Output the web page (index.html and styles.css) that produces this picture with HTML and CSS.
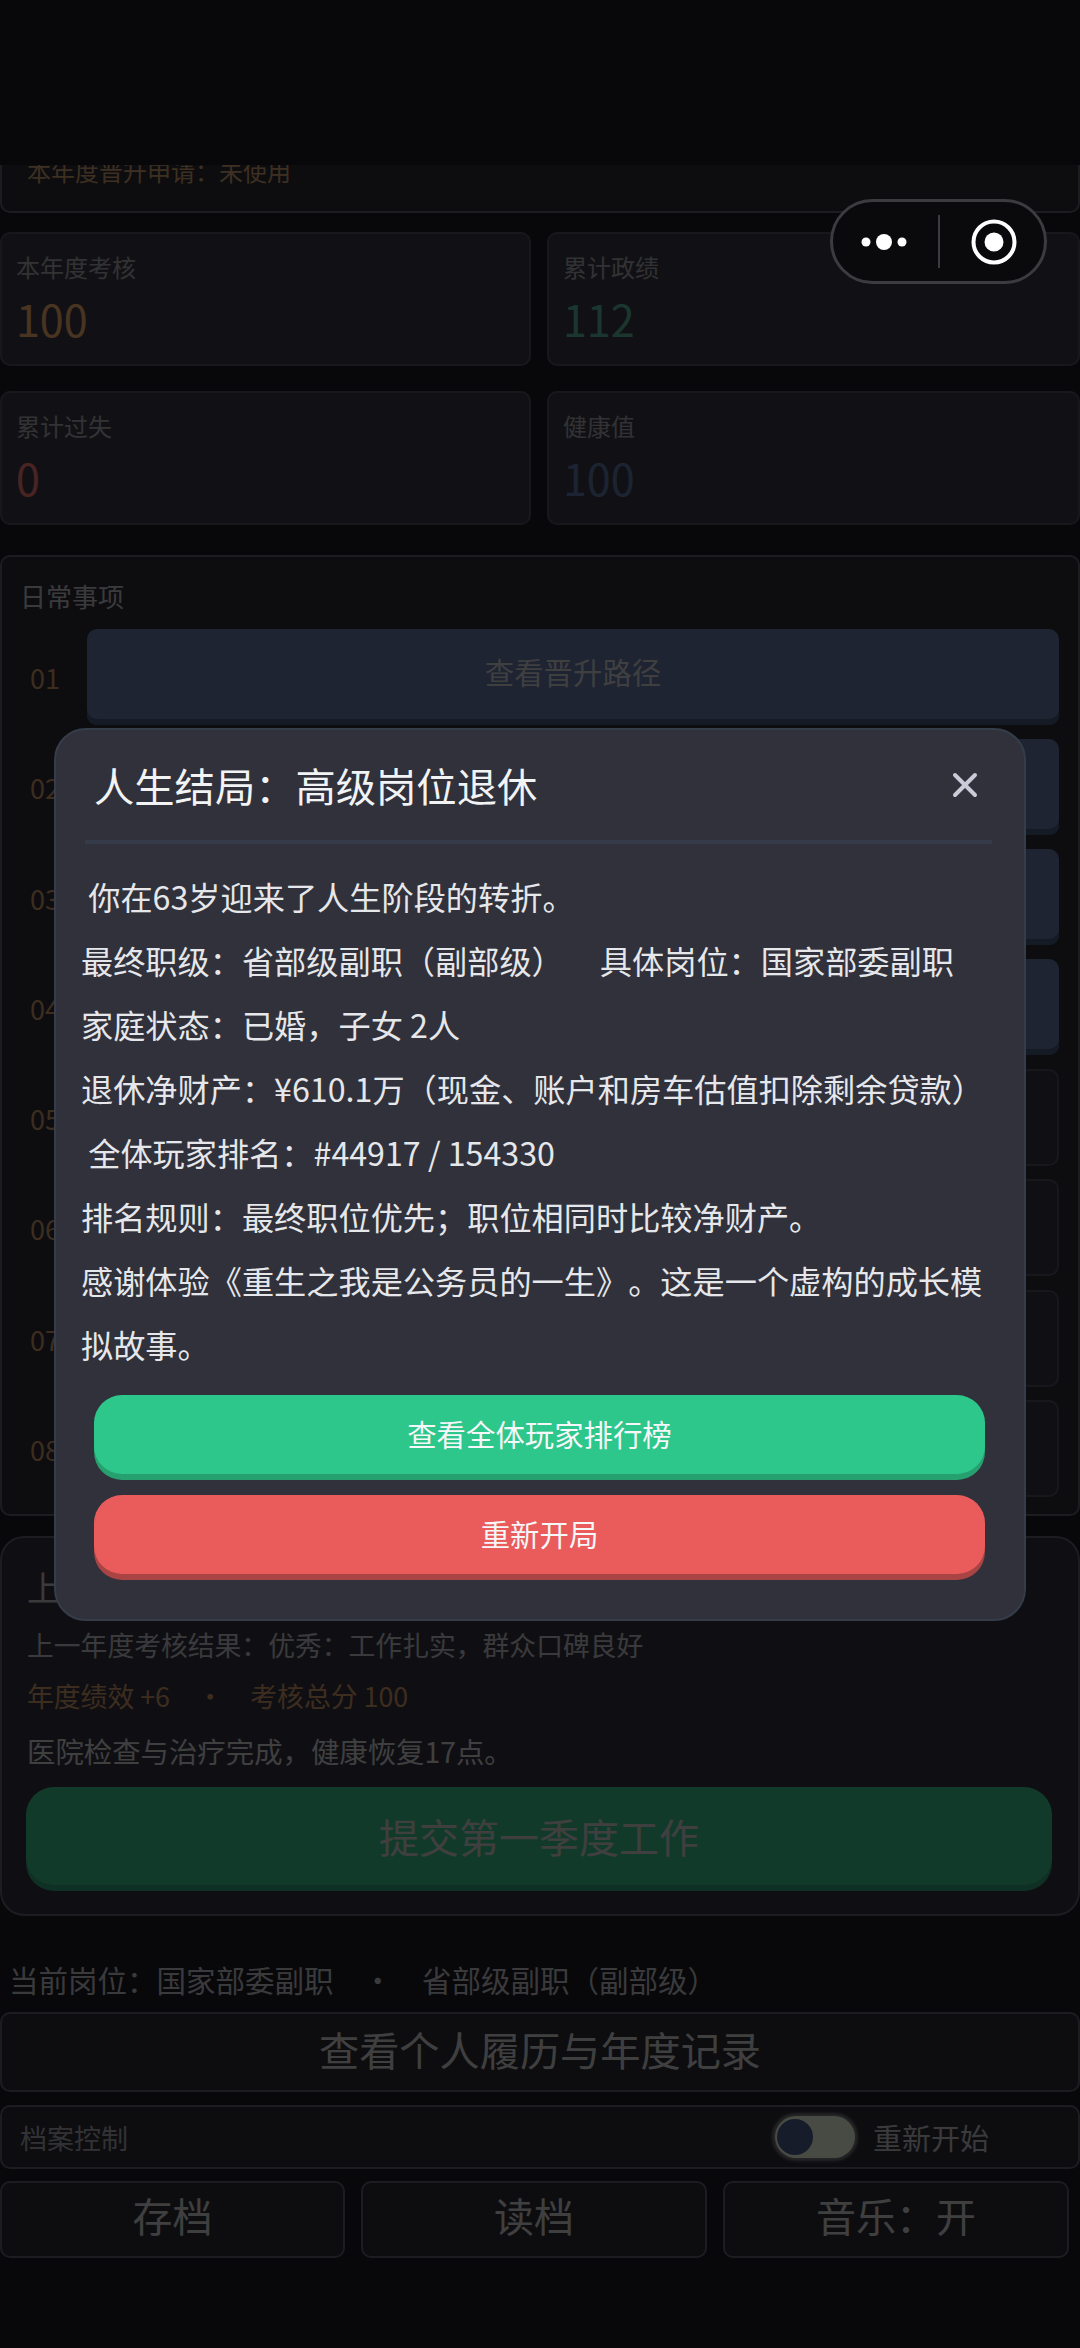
FILE: index.html
```html
<!DOCTYPE html>
<html lang="zh-CN">
<head>
  <meta charset="UTF-8" />
  <meta name="viewport" content="width=device-width, initial-scale=1.0"/>
  <title>人生结局</title>
  <link rel="stylesheet" href="styles.css">
</head>
<body>
  <div class="topbar"></div>

  <div class="page">
    <section class="panel promo">
      <p class="promo-text">本年度晋升申请：未使用</p>
    </section>

    <section class="stats">
      <div class="stat">
        <p class="stat-label">本年度考核</p>
        <p class="stat-value orange">100</p>
      </div>
      <div class="stat">
        <p class="stat-label">累计政绩</p>
        <p class="stat-value green">112</p>
      </div>
      <div class="stat">
        <p class="stat-label">累计过失</p>
        <p class="stat-value red">0</p>
      </div>
      <div class="stat">
        <p class="stat-label">健康值</p>
        <p class="stat-value blue">100</p>
      </div>
    </section>

    <section class="panel daily">
      <h3 class="daily-title">日常事项</h3>
      <div class="daily-row"><span class="row-no">01</span><button class="row-btn primary">查看晋升路径</button></div>
      <div class="daily-row"><span class="row-no">02</span><button class="row-btn primary"></button></div>
      <div class="daily-row"><span class="row-no">03</span><button class="row-btn primary"></button></div>
      <div class="daily-row"><span class="row-no">04</span><button class="row-btn primary"></button></div>
      <div class="daily-row"><span class="row-no">05</span><button class="row-btn"></button></div>
      <div class="daily-row"><span class="row-no">06</span><button class="row-btn"></button></div>
      <div class="daily-row"><span class="row-no">07</span><button class="row-btn"></button></div>
      <div class="daily-row"><span class="row-no">08</span><button class="row-btn"></button></div>
    </section>

    <section class="panel review">
      <h3 class="review-title">上</h3>
      <p class="review-line first">上一年度考核结果：优秀：工作扎实，群众口碑良好</p>
      <p class="review-line score">年度绩效 +6　·　考核总分 100</p>
      <p class="review-line health">医院检查与治疗完成，健康恢复17点。</p>
      <button class="submit-btn">提交第一季度工作</button>
    </section>

    <p class="position">当前岗位：国家部委副职　·　省部级副职（副部级）</p>
    <button class="record-btn">查看个人履历与年度记录</button>

    <div class="archive">
      <span class="archive-label">档案控制</span>
      <span class="toggle"><span class="knob"></span></span>
      <span class="archive-action">重新开始</span>
    </div>

    <div class="actions">
      <button class="action-btn">存档</button>
      <button class="action-btn">读档</button>
      <button class="action-btn">音乐：开</button>
    </div>
  </div>

  <div class="overlay">
    <div class="modal">
      <div class="modal-head">
        <h2 class="modal-title">人生结局：高级岗位退休</h2>
        <svg class="modal-close" width="26" height="26" viewBox="0 0 26 26">
          <path d="M3 3 L23 23 M23 3 L3 23" stroke="#c9ccd8" stroke-width="4" stroke-linecap="round" fill="none"/>
        </svg>
      </div>
      <p class="modal-text"> 你在63岁迎来了人生阶段的转折。
最终职级：省部级副职（副部级）     具体岗位：国家部委副职
家庭状态：已婚，子女 2人
退休净财产：¥610.1万（现金、账户和房车估值扣除剩余贷款）
 全体玩家排名：#44917 / 154330
排名规则：最终职位优先；职位相同时比较净财产。
感谢体验《重生之我是公务员的一生》。这是一个虚构的成长模拟故事。</p>
      <button class="modal-btn rank">查看全体玩家排行榜</button>
      <button class="modal-btn restart">重新开局</button>
    </div>
  </div>

  <div class="capsule">
    <svg width="54" height="18" viewBox="0 0 54 18">
      <circle cx="5" cy="9" r="4.5" fill="#fff"/>
      <circle cx="23" cy="9" r="8" fill="#fff"/>
      <circle cx="41" cy="9" r="4.5" fill="#fff"/>
    </svg>
    <span class="capsule-line"></span>
    <svg width="48" height="48" viewBox="0 0 48 48">
      <circle cx="24" cy="24" r="20.5" stroke="#fff" stroke-width="4" fill="none"/>
      <circle cx="24" cy="24" r="9.5" fill="#fff"/>
    </svg>
  </div>
</body>
</html>
```

FILE: styles.css
```css
* {
  box-sizing: border-box;
}

html, body {
  margin: 0;
  height: 2348px;
  overflow: hidden;
}

body {
  font-family: "Noto Sans CJK SC", "Noto Sans", sans-serif;
  text-spacing-trim: space-all;
  background: #17171d;
  color: #a6a6ac;
  position: relative;
}

p, h2, h3 {
  margin: 0;
  font-weight: 400;
}

button {
  font-family: inherit;
  color: #b4b4b8;
  border: none;
  padding: 0;
}

.topbar {
  position: absolute;
  top: 0;
  left: 0;
  right: 0;
  height: 165px;
  background: #17171d;
  z-index: 1;
}

.page {
  padding-top: 100px;
}

.panel {
  background: #26262f;
  border: 2px solid #505060;
  border-radius: 10px;
}

.promo {
  height: 113px;
  padding: 47px 0 0 25px;
}

.promo-text {
  font-size: 24px;
  line-height: 44px;
  color: #b0875f;
}

.stats {
  display: grid;
  grid-template-columns: 531px 533px;
  column-gap: 16px;
  row-gap: 25px;
  margin-top: 19px;
}

.stat {
  height: 134px;
  padding: 15px 14px 0;
  background: #32333c;
  border: 2px solid #454550;
  border-radius: 10px;
}

.stat-label {
  font-size: 24px;
  line-height: 36px;
  color: #8f8f96;
}

.stat-value {
  font-size: 43px;
  line-height: 60px;
  margin-top: 3px;
}

.orange { color: #d09560; }
.green { color: #4f9c86; }
.red { color: #d06864; }
.blue { color: #506892; }

.daily {
  margin-top: 30px;
  height: 961px;
  padding: 20px 19px 0 0;
}

.daily-title {
  font-size: 26px;
  line-height: 38px;
  margin: 0 0 13px 18px;
  color: #a6a6ac;
}

.daily-row {
  display: flex;
  align-items: center;
  height: 97px;
  margin-bottom: 13.3px;
  padding-left: 28px;
}

.row-no {
  width: 57px;
  margin-top: 2px;
  font-size: 27px;
  color: #b0825a;
}

.row-btn {
  flex: 1;
  height: 97px;
  background: #2e2f3a;
  border: 2px solid #454550;
  border-radius: 10px;
  font-size: 29.4px;
}

.row-btn.primary {
  height: 96px;
  padding-bottom: 12px;
  background: #56678f;
  border: none;
  box-shadow: inset 0 -6px 0 #3c4d6a;
}

.review {
  margin-top: 20px;
  height: 380px;
  padding: 21px 26px 0 24px;
  border-radius: 24px;
  background: #2d2c38;
}

.review-title {
  font-size: 34px;
  line-height: 56px;
  margin-left: 1px;
}

.review-line {
  font-size: 26.8px;
  line-height: 44px;
  margin-left: 1px;
}

.review-line.first {
  margin-top: 8px;
}

.review-line.score {
  color: #b0825a;
  margin-top: 7px;
}

.review-line.health {
  font-size: 28.4px;
  margin-top: 10.5px;
  color: #b4b4b8;
}

.submit-btn {
  display: block;
  width: 100%;
  height: 98px;
  margin-top: 14px;
  font-size: 40px;
  background: #33a678;
  border-radius: 28px;
  box-shadow: 0 6px 0 #2b8967;
}

.position {
  font-size: 29.5px;
  line-height: 44px;
  margin: 41px 0 0 9px;
}

.record-btn {
  display: block;
  width: 100%;
  height: 80px;
  margin-top: 11px;
  padding-bottom: 7px;
  font-size: 40.2px;
  background: #26262f;
  border: 2px solid #505060;
  border-radius: 10px;
}

.archive {
  display: flex;
  align-items: center;
  height: 64px;
  margin-top: 13px;
  padding: 0 18px;
  background: #26262f;
  border: 2px solid #505060;
  border-radius: 10px;
}

.archive-label {
  font-size: 27px;
  color: #8f8f96;
  margin-right: auto;
}

.toggle {
  display: flex;
  align-items: center;
  width: 80px;
  height: 42px;
  padding-left: 2px;
  background: #ced6bf;
  border-radius: 21px;
  box-shadow: 0 0 3px 3px #6a6a70;
}

.knob {
  width: 36px;
  height: 36px;
  border-radius: 50%;
  background: #42507b;
}

.archive-action {
  font-size: 29px;
  margin: 0 71px 0 18px;
}

.actions {
  display: grid;
  grid-template-columns: 345px 346px 346px;
  column-gap: 16px;
  margin-top: 12px;
}

.action-btn {
  height: 77px;
  padding-bottom: 10px;
  font-size: 40px;
  background: #26262f;
  border: 2px solid #505060;
  border-radius: 10px;
}

.overlay {
  position: absolute;
  top: 0;
  left: 0;
  right: 0;
  bottom: 0;
  z-index: 2;
  display: flex;
  align-items: center;
  justify-content: center;
  background: rgba(0, 0, 0, 0.65);
}

.modal {
  width: 972px;
  padding: 0 26px 45px;
  background: #30313b;
  border: 2px solid #353d4a;
  border-radius: 32px;
}

.modal-head {
  display: flex;
  align-items: center;
  justify-content: space-between;
  height: 114px;
  margin: 0 6px 0 3px;
  padding: 0 14px 0 9px;
  border-bottom: 4px solid #353b48;
}

.modal-title {
  font-size: 40.3px;
  line-height: 56px;
  color: #f2f3f5;
}

.modal-text {
  margin: 20px 0 0 -1px;
  font-size: 32.2px;
  line-height: 64px;
  color: #e6e7ea;
  white-space: pre-wrap;
}

.modal-btn {
  display: block;
  width: 891px;
  height: 79px;
  margin-left: 12px;
  padding-bottom: 3px;
  font-size: 29.4px;
  color: #f6f7f8;
  border-radius: 28px;
}

.rank {
  margin-top: 19px;
  background: #2ec78b;
  box-shadow: 0 6px 0 #27a070;
}

.restart {
  margin-top: 21px;
  background: #ea5c5c;
  box-shadow: 0 6px 0 #a84444;
}

.capsule {
  position: absolute;
  top: 199px;
  left: 830px;
  z-index: 3;
  display: flex;
  align-items: center;
  width: 217px;
  height: 85px;
  padding-left: 28px;
  background: #0a0a0c;
  border: 3px solid #3c3c40;
  border-radius: 43px;
}

.capsule-line {
  width: 2px;
  height: 53px;
  margin: 0 30px 0 23px;
  background: #3c3c40;
}
```
